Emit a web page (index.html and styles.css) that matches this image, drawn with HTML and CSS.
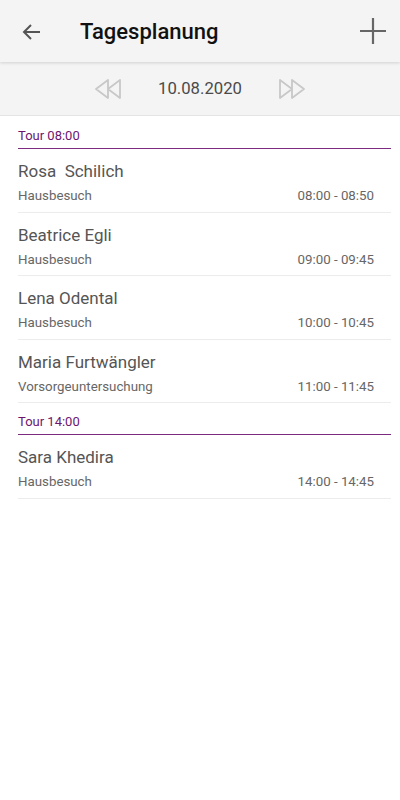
FILE: index.html
```html
<!DOCTYPE html>
<html lang="de">
<head>
    <meta charset="UTF-8">
    <meta name="viewport" content="width=device-width, initial-scale=1.0">
    <title>Tagesplanung</title>
    <link rel="stylesheet" href="styles.css">
</head>
<body>

    <!-- head -->
    <div class="headbar">
        <button class="icon-btn back">
            <svg width="24" height="24" viewBox="0 0 24 24"><path d="M20 12H5M11 5l-7 7 7 7" fill="none" stroke="#555" stroke-width="2"/></svg>
        </button>
        <h1>Tagesplanung</h1>
        <button class="icon-btn add">
            <svg width="28" height="28" viewBox="0 0 28 28"><path d="M14 1v26M1 14h26" fill="none" stroke="#666" stroke-width="2.2"/></svg>
        </button>
    </div>

    <!-- date -->
    <div class="datebar">
        <svg class="nav" width="28" height="22" viewBox="0 0 28 22"><path d="M14 2L2 11l12 9zM26 2L14 11l12 9z" fill="none" stroke="#c8c8c8" stroke-width="1.8" stroke-linejoin="round"/></svg>
        <span class="date">10.08.2020</span>
        <svg class="nav" width="28" height="22" viewBox="0 0 28 22"><path d="M2 2l12 9-12 9zM14 2l12 9-12 9z" fill="none" stroke="#c8c8c8" stroke-width="1.8" stroke-linejoin="round"/></svg>
    </div>

    <!-- list -->
    <div class="list">
        <div class="tour first">Tour 08:00</div>
        <div class="item">
            <div class="name">Rosa&nbsp; Schilich</div>
            <div class="sub"><span>Hausbesuch</span><span>08:00 - 08:50</span></div>
        </div>
        <div class="item">
            <div class="name">Beatrice Egli</div>
            <div class="sub"><span>Hausbesuch</span><span>09:00 - 09:45</span></div>
        </div>
        <div class="item">
            <div class="name">Lena Odental</div>
            <div class="sub"><span>Hausbesuch</span><span>10:00 - 10:45</span></div>
        </div>
        <div class="item">
            <div class="name">Maria Furtwängler</div>
            <div class="sub"><span>Vorsorgeuntersuchung</span><span>11:00 - 11:45</span></div>
        </div>

        <div class="tour">Tour 14:00</div>
        <div class="item">
            <div class="name">Sara Khedira</div>
            <div class="sub"><span>Hausbesuch</span><span>14:00 - 14:45</span></div>
        </div>
    </div>

</body>
</html>
```

FILE: styles.css
```css
body {
    margin: 0;
    background: #ffffff;
    font-family: Roboto, "Noto Sans", sans-serif;
}

.headbar {
    display: flex;
    align-items: center;
    height: 62px;
    background: #f4f4f4;
    box-shadow: 0 1px 3px rgba(0, 0, 0, 0.15);
    position: relative;
}

.headbar h1 {
    flex: 1;
    margin: 0 0 0 28px;
    font-size: 22px;
    font-weight: 500;
    color: #111;
}

.icon-btn {
    background: none;
    border: none;
    padding: 0;
    display: flex;
    align-items: center;
    justify-content: center;
}

.back {
    width: 40px;
    margin-left: 12px;
    margin-top: 1px;
}

.add {
    width: 40px;
    margin-right: 7px;
}

.datebar {
    display: flex;
    align-items: center;
    justify-content: center;
    gap: 36px;
    height: 53px;
    background: #f4f4f4;
    border-bottom: 1px solid #e4e4e4;
}

.date {
    font-size: 16.7px;
    color: #4a4a4a;
}

.nav {
    margin-top: 1px;
}

.list {
    padding: 0 9px 0 18px;
}

.tour {
    height: 32px;
    box-sizing: border-box;
    padding-top: 11px;
    font-size: 13px;
    color: #6c1670;
    border-bottom: 1px solid #7c2a80;
}

.tour.first {
    height: 33px;
    padding-top: 12px;
}

.item {
    height: 63.5px;
    box-sizing: border-box;
    padding: 11px 17px 0 0;
    border-bottom: 1px solid #ececec;
}

.name {
    font-size: 17px;
    color: #555;
    line-height: 22px;
}

.sub {
    display: flex;
    justify-content: space-between;
    margin-top: 5px;
    font-size: 13.3px;
    color: #666;
    line-height: 18px;
}
```
